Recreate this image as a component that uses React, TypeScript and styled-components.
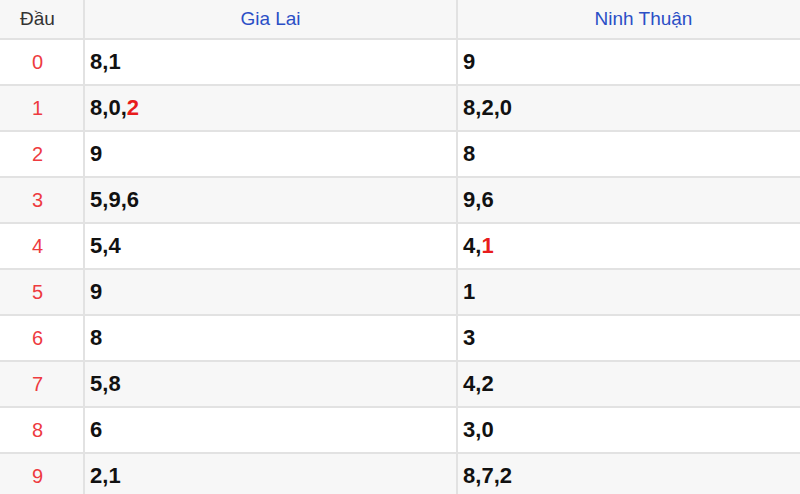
import styled, { createGlobalStyle } from 'styled-components';

const GlobalStyle = createGlobalStyle`
  html, body {
    margin: 0;
    padding: 0;
    background: #ffffff;
    overflow: hidden;
  }
  body {
    font-family: 'Liberation Sans', Arial, sans-serif;
  }
`;

const Wrapper = styled.div`
  width: 800px;
  height: 494px;
  overflow: hidden;
`;

const Table = styled.table`
  width: 830px;
  border-collapse: collapse;
  table-layout: fixed;
`;

const HeadCell = styled.th<{ $accent?: boolean }>`
  height: 38px;
  padding: 0;
  font-weight: normal;
  font-size: 19px;
  text-align: center;
  color: ${(p) => (p.$accent ? '#2b4fc6' : '#333333')};
  background: #f7f7f7;
  border: 2px solid #e2e2e2;
  border-top: none;
  &:first-child {
    border-left: none;
    padding-right: 8px;
  }
`;

const Row = styled.tr<{ $odd: boolean }>`
  background: ${(p) => (p.$odd ? '#f7f7f7' : '#ffffff')};
`;

const HeadCol = styled.td`
  height: 44px;
  padding: 0 8px 0 0;
  text-align: center;
  font-size: 20px;
  color: #ee3b3f;
  border: 2px solid #e2e2e2;
  border-left: none;
`;

const NumCell = styled.td`
  height: 44px;
  padding: 0 0 0 5px;
  font-size: 22px;
  font-weight: bold;
  color: #111111;
  border: 2px solid #e2e2e2;
`;

const Hit = styled.span`
  color: #e81c1c;
`;

type Cell = { v: string[]; red?: number };

const rows: { gl: Cell; nt: Cell }[] = [
  { gl: { v: ['8', '1'] }, nt: { v: ['9'] } },
  { gl: { v: ['8', '0', '2'], red: 2 }, nt: { v: ['8', '2', '0'] } },
  { gl: { v: ['9'] }, nt: { v: ['8'] } },
  { gl: { v: ['5', '9', '6'] }, nt: { v: ['9', '6'] } },
  { gl: { v: ['5', '4'] }, nt: { v: ['4', '1'], red: 1 } },
  { gl: { v: ['9'] }, nt: { v: ['1'] } },
  { gl: { v: ['8'] }, nt: { v: ['3'] } },
  { gl: { v: ['5', '8'] }, nt: { v: ['4', '2'] } },
  { gl: { v: ['6'] }, nt: { v: ['3', '0'] } },
  { gl: { v: ['2', '1'] }, nt: { v: ['8', '7', '2'] } },
];

function Numbers({ cell }: { cell: Cell }) {
  return (
    <>
      {cell.v.map((d, i) => (
        <span key={i}>
          {i > 0 ? ',' : ''}
          {i === cell.red ? <Hit>{d}</Hit> : d}
        </span>
      ))}
    </>
  );
}

export default function App() {
  return (
    <Wrapper>
      <GlobalStyle />
      <Table>
        <colgroup>
          <col style={{ width: 84 }} />
          <col style={{ width: 373 }} />
          <col style={{ width: 373 }} />
        </colgroup>
        <thead>
          <tr>
            <HeadCell>Đầu</HeadCell>
            <HeadCell $accent>Gia Lai</HeadCell>
            <HeadCell $accent>Ninh Thuận</HeadCell>
          </tr>
        </thead>
        <tbody>
          {rows.map((r, i) => (
            <Row key={i} $odd={i % 2 === 1}>
              <HeadCol>{i}</HeadCol>
              <NumCell>
                <Numbers cell={r.gl} />
              </NumCell>
              <NumCell>
                <Numbers cell={r.nt} />
              </NumCell>
            </Row>
          ))}
        </tbody>
      </Table>
    </Wrapper>
  );
}
